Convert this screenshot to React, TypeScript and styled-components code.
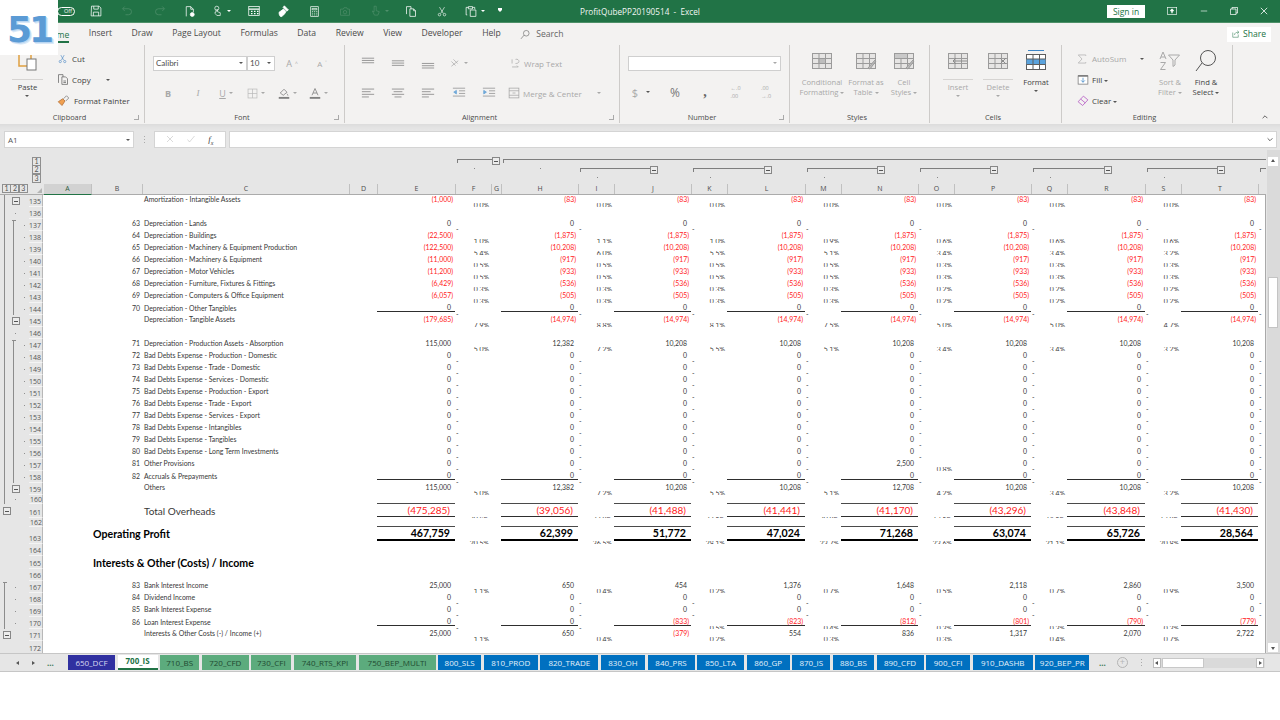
import React from 'react';
import styled, { createGlobalStyle } from 'styled-components';

const GREEN = '#217346';
const CHROME = '#e6e6e6';
const RIBBON = '#f3f2f1';
const MUTED = '#a8a8a8';
const INK = '#5a5a5a';
const UI_FONT = '"Open Sans", "Noto Sans", sans-serif';
const CELL_FONT = 'Lato, "Liberation Sans", sans-serif';
const COLS = '48px 51px 207px 28px 78px 36px 10px 77px 36px 77px 36px 78px 36px 77px 36px 77px 36px 78px 36px 77px 7px';

const GlobalStyle = createGlobalStyle`
	html, body {
		margin: 0;
		padding: 0;
		background: #fff;
		overflow: hidden;
	}
	* {
		box-sizing: border-box;
	}
`;

const Shell = styled.div`
	position: relative;
	width: 1280px;
	height: 720px;
	display: flex;
	flex-direction: column;
	font-family: ${UI_FONT};
	background: #fff;
`;

/* watermark square lying over the top left corner of the window */
const Badge = styled.div`
	position: absolute;
	left: 0;
	top: 0;
	width: 58px;
	height: 55px;
	background: #fff;
	display: flex;
	align-items: center;
	justify-content: center;
	padding: 5px 0 0 0;
	font: bold 36px/1 'DejaVu Sans', sans-serif;
	letter-spacing: -3px;
	color: #5b9bd5;
	text-shadow: 1px 1px 0 #b9d6f2, 2px 2px 0 #d9e8f7;
	transform-origin: center;
`;

const TitleBar = styled.header`
	height: 23px;
	background: ${GREEN};
	border-bottom: 1px solid #4d9068;
	display: grid;
	grid-template-columns: 1fr auto 1fr;
	align-items: center;
	color: #fff;
`;

const Qat = styled.div`
	display: flex;
	align-items: center;
	padding-left: 57px;
`;

const QatSlot = styled.div<{ $w: number }>`
	width: ${(p) => p.$w}px;
	height: 22px;
	display: flex;
	align-items: center;
	justify-content: center;
	gap: 4px;
`;

const Toggle = styled.div`
	width: 18px;
	height: 9px;
	border: 1px solid #fff;
	border-radius: 5px;
	font-size: 5.5px;
	line-height: 7px;
	text-align: right;
	padding-right: 2px;
	color: #fff;
`;

const Title = styled.div`
	font-size: 8.2px;
	white-space: pre;
	color: #f1f6f3;
`;

const WindowControls = styled.div`
	display: flex;
	align-items: center;
	justify-content: flex-end;
	padding-right: 1px;
`;

const SignIn = styled.button`
	width: 38px;
	height: 13px;
	margin-right: 12px;
	border: none;
	padding: 0;
	background: #fff;
	color: ${GREEN};
	font: 8.5px/13px ${UI_FONT};
`;

const WindowButton = styled.div<{ $mr?: number }>`
	width: 30px;
	height: 22px;
	margin-right: ${(p) => p.$mr ?? 0}px;
	display: flex;
	align-items: center;
	justify-content: center;
`;

const TabStrip = styled.nav`
	height: 22px;
	background: ${RIBBON};
	display: flex;
	align-items: center;
	padding-left: 45px;
	gap: 19.5px;
	font-size: 8.6px;
	color: #4a4a4a;
`;

const RibbonTab = styled.span<{ $active?: boolean }>`
	height: 22px;
	line-height: 20px;
	white-space: nowrap;
	${(p) => (p.$active ? `color: ${GREEN}; border-bottom: 2px solid ${GREEN}; height: 18px; margin-top: -1px; line-height: 20px;` : '')}
`;

const SearchBox = styled.span`
	display: flex;
	align-items: center;
	gap: 6px;
	color: #666;
	margin-left: 0;
`;

const ShareButton = styled.div`
	margin-left: auto;
	margin-right: 9px;
	width: 44px;
	height: 15px;
	background: #fff;
	color: ${GREEN};
	font-size: 8.6px;
	display: flex;
	align-items: center;
	justify-content: center;
	gap: 3px;
`;

const Ribbon = styled.section`
	height: 79px;
	background: ${RIBBON};
	display: flex;
`;

const Group = styled.div<{ $w: number }>`
	width: ${(p) => p.$w}px;
	height: 78px;
	display: flex;
	flex-direction: column;
	border-right: 1px solid #cdcbc9;
`;

const GroupBody = styled.div<{ $pl?: number }>`
	height: 66px;
	padding: 3px 0 0 ${(p) => p.$pl ?? 0}px;
	display: flex;
`;

const GroupLabel = styled.div`
	height: 12px;
	display: grid;
	grid-template-columns: 1fr auto 1fr;
	align-items: center;
	font-size: 7.4px;
	color: #4c4c4c;
	padding-right: 5px;
`;

const Launcher = styled.span`
	grid-column: 3;
	justify-self: end;
	width: 5px;
	height: 5px;
	border: 1px solid #a9a9a9;
	border-width: 0 1px 1px 0;
`;

const ToolColumn = styled.div<{ $w?: number; $dim?: boolean }>`
	width: ${(p) => (p.$w ? `${p.$w}px` : 'auto')};
	display: flex;
	flex-direction: column;
	align-items: center;
	font-size: 7.6px;
	line-height: 10px;
	color: ${(p) => (p.$dim ? MUTED : '#3f3f3f')};
	white-space: nowrap;
`;

const BigIcon = styled.div`
	height: 26px;
	display: flex;
	align-items: center;
	justify-content: center;
	margin-bottom: 3px;
`;

const SplitRule = styled.div`
	width: 100%;
	height: 1px;
	background: #d6d4d2;
	margin: 2px 0 2px;
`;

const Stack = styled.div<{ $w?: number }>`
	width: ${(p) => (p.$w ? `${p.$w}px` : 'auto')};
	display: flex;
	flex-direction: column;
`;

const Line = styled.div<{ $h?: number; $dim?: boolean; $gap?: number }>`
	height: ${(p) => p.$h ?? 21}px;
	display: flex;
	align-items: center;
	gap: ${(p) => p.$gap ?? 3}px;
	font-size: 8px;
	white-space: nowrap;
	color: ${(p) => (p.$dim ? MUTED : '#3f3f3f')};
`;

const Slot = styled.div<{ $w: number; $color?: string; $size?: number }>`
	width: ${(p) => p.$w}px;
	display: flex;
	align-items: center;
	justify-content: center;
	gap: 3px;
	font-size: ${(p) => p.$size ?? 8}px;
	color: ${(p) => p.$color ?? MUTED};
`;

const Caret = styled.span<{ $dim?: boolean; $ml?: number }>`
	display: inline-block;
	width: 0;
	height: 0;
	margin-left: ${(p) => p.$ml ?? 0}px;
	border-left: 2px solid transparent;
	border-right: 2px solid transparent;
	border-top: 2.5px solid ${(p) => (p.$dim ? MUTED : '#555')};
	vertical-align: middle;
`;

const Combo = styled.div<{ $w: number }>`
	width: ${(p) => p.$w}px;
	height: 15px;
	background: #fff;
	border: 1px solid #cfcfcf;
	display: flex;
	align-items: center;
	justify-content: space-between;
	padding: 0 3px 0 2px;
	font: 8px ${CELL_FONT};
	color: #4d4d4d;
`;

const FormulaRow = styled.div`
	height: 26px;
	background: linear-gradient(#dcdcdc 0, #e2e2e2 3px, ${CHROME} 6px);
	padding: 7px 3px 0 4px;
	display: flex;
	align-items: flex-start;
`;

const InputBox = styled.div<{ $w?: number; $ml?: number }>`
	${(p) => (p.$w ? `width: ${p.$w}px;` : 'flex: 1;')}
	margin-left: ${(p) => p.$ml ?? 0}px;
	height: 17px;
	background: #fff;
	border: 1px solid #d4d4d4;
	display: flex;
	align-items: center;
	justify-content: space-between;
	padding: 0 3px;
	font-size: 8px;
	color: #555;
`;

const FxIcons = styled.div`
	flex: 1;
	display: flex;
	align-items: center;
	justify-content: space-around;
	padding: 0 2px;
`;

const Dots = styled.span`
	width: 1px;
	height: 7px;
	margin: 5px 0 0 10px;
	background: repeating-linear-gradient(#aaa 0 1px, transparent 1px 3px);
`;

const Middle = styled.main`
	height: 503px;
	display: flex;
	background: ${CHROME};
`;

const SheetArea = styled.div`
	width: 1266px;
	display: flex;
	flex-direction: column;
`;

const OutlineHead = styled.div`
	height: 34px;
	padding-top: 7px;
	display: flex;
	background: ${CHROME};
`;

const LevelStack = styled.div`
	width: 44px;
	padding-left: 32px;
	display: flex;
	flex-direction: column;
`;

const LevelButton = styled.span`
	width: 9px;
	height: 9px;
	border: 1px solid #8f8f8f;
	background: ${CHROME};
	font: 7px/7px ${CELL_FONT};
	color: #555;
	text-align: center;
	margin-bottom: -0.6px;
	display: block;
`;

const Lanes = styled.div`
	flex: 1;
	display: flex;
	flex-direction: column;
`;

const Lane = styled.div`
	height: 9px;
	display: grid;
	grid-template-columns: ${COLS};
`;

const Bracket = styled.div<{ $start: number; $span: number; $inset?: number }>`
	grid-column: ${(p) => p.$start} / span ${(p) => p.$span};
	display: flex;
	align-items: flex-start;
	padding-left: 1px;
	padding-right: ${(p) => p.$inset ?? 0}px;
`;

const BracketLine = styled.div`
	flex: 1;
	height: 4px;
	margin-top: 1.5px;
	border-top: 1px solid #7e7e7e;
	border-left: 1px solid #7e7e7e;
`;

const Minus = styled.span`
	display: flex;
	align-items: center;
	justify-content: center;
	flex: none;
	width: 8px;
	height: 8px;
	border: 1px solid #878787;
	background: #ececec;

	&::before {
		content: '';
		width: 4px;
		height: 1px;
		background: #555;
	}
`;

const DotCell = styled.div<{ $start: number }>`
	grid-column: ${(p) => p.$start};
	display: flex;
	justify-content: center;
	padding-top: 1.5px;

	&::before {
		content: '';
		width: 1px;
		height: 1px;
		background: #888;
	}
`;

const ColumnHead = styled.div`
	height: 11px;
	display: flex;
	background: ${CHROME};
	border-bottom: 1px solid #ababab;
`;

const LevelRow = styled.div`
	width: 30px;
	padding-left: 2px;
	display: flex;
`;

const LevelInline = styled(LevelButton)`
	height: 9px;
	margin: 0 -0.6px 0 0;
`;

const Corner = styled.div`
	width: 14px;
	display: flex;
	align-items: flex-end;
	justify-content: flex-end;
	padding: 0 2px 1px 0;

	&::before {
		content: '';
		width: 0;
		height: 0;
		border-left: 5px solid transparent;
		border-bottom: 5px solid #b5b5b5;
	}
`;

const Letters = styled.div`
	display: grid;
	grid-template-columns: ${COLS};
`;

const Letter = styled.div<{ $on?: boolean }>`
	height: 10px;
	font: 7px/10px ${UI_FONT};
	text-align: center;
	color: #4c4c4c;
	border-right: 1px solid #c0c0c0;
	${(p) => (p.$on ? `background: #d2d2d2; border-bottom: 1px solid ${GREEN}; height: 11px; color: #2f5d43;` : '')}
`;

const SheetRows = styled.div`
	flex: 1;
	display: flex;
	flex-direction: column;
	border-right: 1px solid #a9a9a9;
`;

const SheetRow = styled.div<{ $h: number }>`
	height: ${(p) => p.$h}px;
	display: flex;
`;

const Gutter = styled.div`
	width: 30px;
	padding-left: 2px;
	display: grid;
	grid-template-columns: 9px 9px 9px;
	background: ${CHROME};
`;

const GutterSlot = styled.div<{ $line?: boolean; $tick?: boolean }>`
	display: flex;
	align-items: center;
	justify-content: center;
	${(p) =>
		p.$line
			? `background: linear-gradient(#8c8c8c, #8c8c8c) no-repeat 1.5px ${p.$tick ? '2px' : '0'} / 1px 100%;`
			: ''}
	${(p) =>
		p.$tick
			? `&::before { content: ''; width: 4px; height: 1px; background: #8c8c8c; margin: -10px 0 0 -4px; }`
			: ''}
`;

const OutlineDot = styled.span`
	width: 1px;
	height: 1px;
	background: #909090;
`;

const RowHeader = styled.div<{ $h: number }>`
	width: 14px;
	height: ${(p) => p.$h}px;
	background: ${CHROME};
	border-bottom: 1px solid #f4f4f4;
	border-right: 1px solid #b8b8b8;
	font: 7px/9px ${UI_FONT};
	color: #555;
	text-align: right;
	padding: ${(p) => p.$h - 10}px 1px 0 0;
`;

const Cells = styled.div`
	flex: 1;
	background: #fff;
	display: grid;
	grid-template-columns: ${COLS};
`;

type Tone = 'normal' | 'total' | 'profit';

const sizes: Record<Tone, string> = {
	normal: '6.9px',
	total: '10px',
	profit: '10.6px',
};

const Note = styled.div<{ $tone: Tone; $col: number }>`
	grid-column: ${(p) => p.$col};
	font-family: ${CELL_FONT};
	font-size: ${(p) => sizes[p.$tone]};
	font-weight: ${(p) => (p.$tone === 'profit' ? 700 : 400)};
	color: ${(p) => (p.$tone === 'profit' ? '#000' : '#383838')};
	white-space: nowrap;
	display: flex;
	align-items: center;
	padding-left: 2px;
`;

const SerialNo = styled.div`
	grid-column: 2;
	font: 6.9px ${CELL_FONT};
	color: #383838;
	display: flex;
	align-items: center;
	justify-content: flex-end;
	padding-right: 2px;
`;

const ValueCell = styled.div<{ $col: number; $tone: Tone; $neg?: boolean; $rule?: string }>`
	grid-column: ${(p) => p.$col};
	font-family: ${CELL_FONT};
	font-size: ${(p) => sizes[p.$tone]};
	font-weight: ${(p) => (p.$tone === 'profit' ? 700 : 400)};
	color: ${(p) => (p.$neg ? '#ff1a1a' : p.$tone === 'profit' ? '#000' : '#383838')};
	display: flex;
	align-items: center;
	justify-content: flex-end;
	white-space: nowrap;
	padding-right: ${(p) => (p.$tone !== 'normal' ? 5 : p.$neg ? 2 : 4)}px;
	${(p) => (p.$rule ? `border-bottom: ${p.$rule};` : '')}
`;

const PctCell = styled.div<{ $col: number; $dash: boolean }>`
	grid-column: ${(p) => p.$col};
	font: 6.9px ${CELL_FONT};
	color: #383838;
	display: flex;
	align-items: center;
	justify-content: ${(p) => (p.$dash ? 'flex-start' : 'flex-end')};
	padding: ${(p) => (p.$dash ? '0 0 0 1px' : '0 2px 0 0')};
	overflow: hidden;
`;

const VScroll = styled.aside`
	width: 14px;
	padding: 7px 2px 1px;
	display: flex;
	flex-direction: column;
	justify-content: space-between;
	background: linear-gradient(90deg, ${CHROME} 1px, #dadada 1px);
`;

const ScrollEnd = styled.div`
	width: 10px;
	height: 9px;
	background: #fff;
	display: flex;
	align-items: center;
	justify-content: center;
`;

const Arrow = styled.span<{ $dir: 'up' | 'down' | 'left' | 'right' }>`
	width: 0;
	height: 0;
	border: 2.5px solid transparent;
	${(p) => `border-${{ up: 'bottom', down: 'top', left: 'right', right: 'left' }[p.$dir]}: 3px solid #555;`}
	${(p) => (p.$dir === 'up' ? 'margin-top: -3px;' : p.$dir === 'down' ? 'margin-bottom: -3px;' : p.$dir === 'left' ? 'margin-left: -3px;' : 'margin-right: -3px;')}
`;

const VThumb = styled.div`
	width: 10px;
	height: 53px;
	margin-top: 111px;
	margin-bottom: 315px;
	background: #fff;
	border: 1px solid #c4c4c4;
`;

const TabBar = styled.footer`
	height: 19px;
	background: ${CHROME};
	border-top: 1px solid #c6c6c6;
	border-bottom: 1px solid #c6c6c6;
	display: flex;
	align-items: center;
	font-family: ${UI_FONT};
`;

const TabNav = styled.div`
	width: 68px;
	display: flex;
	align-items: center;
	padding-left: 17px;
	gap: 13px;
	font-size: 8px;
	font-weight: 700;
	color: #3f7a56;
	line-height: 1;
`;

const SheetTabs = styled.div`
	width: 1026px;
	display: flex;
	overflow: hidden;
`;

const palette = {
	purple: { bg: '#3030a0', fg: '#d8d8f0' },
	green: { bg: '#5cab7d', fg: '#1f4a31' },
	blue: { bg: '#0070c0', fg: '#e4f0fa' },
};

const SheetTab = styled.div<{ $w: number; $kind: keyof typeof palette }>`
	flex: none;
	width: ${(p) => p.$w}px;
	height: 15px;
	margin-right: 2.6px;
	background: ${(p) => palette[p.$kind].bg};
	color: ${(p) => palette[p.$kind].fg};
	font-size: 8px;
	line-height: 15px;
	text-align: center;
	white-space: nowrap;
	overflow: hidden;
`;

const ActiveTab = styled(SheetTab)`
	background: #fff;
	color: ${GREEN};
	font-weight: 700;
	height: 17px;
	line-height: 15px;
	border-bottom: 2px solid ${GREEN};
	margin-top: -2px;
`;

const TabTools = styled.div`
	flex: 1;
	display: flex;
	align-items: center;
	font-size: 8px;
	font-weight: 700;
	color: #3f7a56;
	padding-left: 5px;
`;

const PlusCircle = styled.span`
	width: 11px;
	height: 11px;
	margin-left: 11px;
	border: 1px solid #b4b4b4;
	border-radius: 50%;
	font: 9px/8px ${UI_FONT};
	color: #b4b4b4;
	text-align: center;
`;

const SplitDots = styled(Dots)`
	margin: 0 11px 0 13px;
	height: 8px;
`;

const HScroll = styled.div`
	width: 112px;
	height: 10px;
	display: flex;
	background: #dadada;
`;

const HEnd = styled.div`
	width: 8px;
	background: #fff;
	border: 1px solid #bcbcbc;
	display: flex;
	align-items: center;
	justify-content: center;
`;

const HThumb = styled.div`
	width: 42px;
	margin-left: 1px;
	background: #fff;
	border: 1px solid #c8c8c8;
	margin-right: auto;
`;

type SvgProps = { w?: number; h?: number; box?: string; stroke?: string; fill?: string; children: React.ReactNode };

function Draw({ w = 14, h = 14, box = '0 0 16 16', stroke = '#666', fill = 'none', children }: SvgProps) {
	return (
		<svg width={w} height={h} viewBox={box} fill={fill} stroke={stroke} strokeWidth={1} style={{ flex: 'none' }}>
			{children}
		</svg>
	);
}

function TextLines({ align, valign, color = '#8d8d8d' }: { align?: 'left' | 'center'; valign?: number; color?: string }) {
	const y = valign ?? 3;
	const gap = align ? 3 : 2.6;
	const rows = align === undefined ? [14, 14, 14] : align === 'left' ? [14, 10, 14, 8] : [14, 10, 14, 8];
	return (
		<Draw stroke={color}>
			{rows.map((len, i) => {
				const x = align === 'center' ? 8 - len / 2 : 1;
				return <path key={i} d={`M${x} ${y + i * gap + 0.5}h${len}`} />;
			})}
		</Draw>
	);
}

function Indent({ back }: { back?: boolean }) {
	return (
		<Draw stroke="#9a9a9a">
			<path d="M1 2.5h14M8 5.5h7M8 8.5h7M1 11.5h14" />
			<path d={back ? 'M5 5 2 7l3 2z' : 'M2 5l3 2-3 2z'} fill="#6fa8d8" stroke="#6fa8d8" />
		</Draw>
	);
}

function TableIcon({ children, size = 22 }: { children?: React.ReactNode; size?: number }) {
	return (
		<Draw w={size} h={size} box="0 0 22 22" stroke="#9b9b9b">
			<rect x="1.5" y="3.5" width="19" height="15" fill="#e6e5e4" />
			<path d="M1.5 8.5h19M1.5 13.5h19M8 3.5v15M14.5 3.5v15" />
			{children}
		</Draw>
	);
}

function QatBar() {
	return (
		<Qat>
			<QatSlot $w={18}>
				<Toggle>Off</Toggle>
			</QatSlot>
			<QatSlot $w={6} />
			<QatSlot $w={30}>
				<Draw stroke="#fff" w={12} h={12}>
					<path d="M2 1.5h10l2.5 2.5v10.5h-13zM5 1.5v4h6v-4M4.5 14.5v-5h7v5" />
				</Draw>
			</QatSlot>
			<QatSlot $w={32}>
				<Draw stroke="#4f8f6b" w={12} h={12}>
					<path d="M5 2 2 5l3 3M2.5 5H10a4 4 0 0 1 0 8H6" />
				</Draw>
			</QatSlot>
			<QatSlot $w={34}>
				<Draw stroke="#4f8f6b" w={12} h={12}>
					<path d="m11 2 3 3-3 3M13.5 5H6a4 4 0 0 0 0 8h4" />
				</Draw>
			</QatSlot>
			<QatSlot $w={26}>
				<Draw stroke="#fff" w={12} h={13}>
					<path d="M3 14.5v-13h6l3.5 3.5v4M9 1.5v3.5h3.500" />
					<circle cx="11" cy="12" r="2.6" fill="#fff" />
				</Draw>
			</QatSlot>
			<QatSlot $w={37}>
				<Draw stroke="#fff" w={11} h={14}>
					<circle cx="7" cy="4" r="3" />
					<path d="M6 5.500v4H4.500v2l2.500 3h5v-4l-4-1.500v-3.500" />
				</Draw>
				<Caret style={{ borderTopColor: '#fff' }} />
			</QatSlot>
			<QatSlot $w={27}>
				<Draw stroke="#fff" w={12} h={12}>
					<rect x="1" y="2" width="14" height="12" />
					<path d="M1 5.500h14M4 8.500h2M8 8.500h2M12 8.500h2M4 11.500h2M8 11.500h2M12 11.500h2" strokeWidth="1.5" />
				</Draw>
			</QatSlot>
			<QatSlot $w={33}>
				<Draw stroke="#fff" w={13} h={13}>
					<path d="m9 1 5 5-2 1.500L7.500 3zM8 5 2.500 9c0 3 1 5 2.500 5.500 2-1 4.500-3 6-6.500z" fill="#fff" />
				</Draw>
			</QatSlot>
			<QatSlot $w={29}>
				<Draw stroke="#fff" w={11} h={13}>
					<rect x="2.500" y="1" width="11" height="14" />
					<path d="M4.500 3.500h7v2h-7zM4.500 8h1.500M7.500 8H9M10.500 8H12M4.500 10.500h1.500M7.500 10.500H9M10.500 10.500H12M4.500 13h1.500M7.500 13H9M10.500 13H12" />
				</Draw>
			</QatSlot>
			<QatSlot $w={32}>
				<Draw stroke="#4f8f6b" w={12} h={11}>
					<path d="M1.500 4.500h4l1-2h4l1 2h3v9h-13z" />
					<circle cx="8" cy="9" r="2.500" />
				</Draw>
			</QatSlot>
			<QatSlot $w={36}>
				<Draw stroke="#4f8f6b" w={11} h={14}>
					<path d="M6 1v8l-2.500-1 3 6h5l2-5-4.500-1.500V1z" />
				</Draw>
				<Caret style={{ borderTopColor: '#4f8f6b' }} />
			</QatSlot>
			<QatSlot $w={27}>
				<Draw stroke="#fff" w={12} h={13}>
					<path d="M2 11.500v-10h6v3M6.500 14.500v-10h5l2.500 2.500v7.500zM11.500 4.500V7H14" />
				</Draw>
			</QatSlot>
			<QatSlot $w={35}>
				<Draw stroke="#fff" w={10} h={13}>
					<path d="m4 1 6 10M12 1 6 11" />
					<circle cx="4" cy="13" r="2" />
					<circle cx="12" cy="13" r="2" />
				</Draw>
			</QatSlot>
			<QatSlot $w={32}>
				<Draw stroke="#fff" w={12} h={13}>
					<path d="M3 12.500h-1.500v-10h3M10 2.500h3V5M4.500 1.500h5.500v3h-5.500zM7 6h7.500v8.500H7z" />
				</Draw>
				<Caret style={{ borderTopColor: '#fff' }} />
			</QatSlot>
			<QatSlot $w={18}>
				<Caret style={{ borderTopColor: '#fff', boxShadow: '0 -2px 0 0 #fff' }} />
			</QatSlot>
		</Qat>
	);
}

function WindowBar() {
	return (
		<WindowControls>
			<SignIn>Sign in</SignIn>
			<WindowButton $mr={2}>
				<Draw stroke="#fff" w={10} h={8} box="0 0 16 12">
					<rect x="0.500" y="0.500" width="15" height="11" />
					<path d="M8 9.500V4M5.500 6 8 3.500 10.500 6" strokeWidth="2" />
				</Draw>
			</WindowButton>
			<WindowButton>
				<Draw stroke="#cfe2d7" w={8} h={8} box="0 0 10 10">
					<path d="M1 5h8" />
				</Draw>
			</WindowButton>
			<WindowButton>
				<Draw stroke="#fff" w={8} h={8} box="0 0 10 10">
					<path d="M0.500 2.500h7v7h-7zM2.500 2.500v-2h7v7h-2" />
				</Draw>
			</WindowButton>
			<WindowButton>
				<Draw stroke="#fff" w={8} h={8} box="0 0 10 10">
					<path d="m1 1 8 8M9 1 1 9" />
				</Draw>
			</WindowButton>
		</WindowControls>
	);
}

function RibbonTabs() {
	return (
		<TabStrip>
			<RibbonTab $active>Home</RibbonTab>
			<RibbonTab>Insert</RibbonTab>
			<RibbonTab>Draw</RibbonTab>
			<RibbonTab>Page Layout</RibbonTab>
			<RibbonTab>Formulas</RibbonTab>
			<RibbonTab>Data</RibbonTab>
			<RibbonTab>Review</RibbonTab>
			<RibbonTab>View</RibbonTab>
			<RibbonTab>Developer</RibbonTab>
			<RibbonTab>Help</RibbonTab>
			<SearchBox>
				<Draw w={10} h={11} stroke="#666">
					<circle cx="10" cy="6" r="4.500" />
					<path d="M6.500 9 1.500 15" />
				</Draw>
				Search
			</SearchBox>
			<ShareButton>
				<Draw w={8} h={8} stroke={GREEN}>
					<path d="M1.500 5v9.500h11V9M5 10c0-4 3-5.500 8-5.500M10.500 1.500l3.500 3-3.500 3" />
				</Draw>
				Share
			</ShareButton>
		</TabStrip>
	);
}

function RibbonGroups() {
	return (
		<Ribbon>
			<Group $w={145}>
				<GroupBody $pl={12}>
					<ToolColumn $w={32}>
						<BigIcon>
							<Draw w={24} h={24} box="0 0 24 24" stroke="#e0a040">
								<path d="M7 4h9v13H4V4z" strokeWidth="1.500" />
								<rect x="12" y="10" width="9" height="11" fill="#fff" stroke="#777" />
							</Draw>
						</BigIcon>
						<SplitRule />
						Paste
						<Caret style={{ marginTop: 3 }} />
					</ToolColumn>
					<Stack $w={90} style={{ marginLeft: 14 }}>
						<Line $gap={4}>
							<Slot $w={11}>
								<Draw w={9} h={12} stroke="#3d7fc0">
									<path d="m5 1 5 9M11 1 6 10" />
									<circle cx="4" cy="12.500" r="2" />
									<circle cx="12" cy="12.500" r="2" />
								</Draw>
							</Slot>
							Cut
						</Line>
						<Line $gap={3}>
							<Draw w={12} h={13} stroke="#666">
								<path d="M2 12.500v-11h6v3M6.500 14.500v-10h5l2.500 2.500v7.500zM8.500 10h3.500M8.500 12h3.500" />
							</Draw>
							Copy
							<Caret $ml={12} />
						</Line>
						<Line $gap={4}>
							<Draw w={13} h={12} stroke="#b06a30">
								<path d="m1 9 6-4 3 3-4 6z" fill="#f0a050" />
								<path d="m8 5 4-4 3 3-4 4" stroke="#777" />
							</Draw>
							Format Painter
						</Line>
					</Stack>
				</GroupBody>
				<GroupLabel>
					<span style={{ gridColumn: 2 }}>Clipboard</span>
					<Launcher />
				</GroupLabel>
			</Group>

			<Group $w={200}>
				<GroupBody $pl={8}>
					<Stack>
						<Line $h={30} $gap={0}>
							<Combo $w={94}>
								Calibri
								<Caret />
							</Combo>
							<Combo $w={28}>
								10
								<Caret />
							</Combo>
							<Slot $w={30} style={{ marginLeft: 2 }} $size={9}>A<sup style={{ fontSize: 5 }}>^</sup></Slot>
							<Slot $w={30} $size={8}>A<sup style={{ fontSize: 5 }}>˅</sup></Slot>
						</Line>
						<Line $h={30} $gap={0} style={{ paddingLeft: 0 }}>
							<Slot $w={30} style={{ marginRight: 0 }} $size={9}>
								<b>B</b>
							</Slot>
							<Slot $w={30} $size={9}>
								<i style={{ fontFamily: 'Liberation Serif, serif' }}>I</i>
							</Slot>
							<Slot $w={26} $size={9}>
								<u>U</u>
								<Caret $dim />
							</Slot>
							<Slot $w={33}>
								<Draw w={11} h={11} stroke="#b8b8b8">
									<rect x="1.500" y="1.500" width="13" height="13" />
									<path d="M1.500 8h13M8 1.500v13" />
								</Draw>
								<Caret $dim />
							</Slot>
							<Slot $w={31}>
								<Draw w={12} h={12} stroke="#777">
									<path d="m3 8 5-5 4 4-5 4zM12 9c1 1.500 1.500 2 1 2.500" />
									<path d="M1 14.500h14" stroke="#808080" strokeWidth="2.500" />
								</Draw>
								<Caret $dim />
							</Slot>
							<Slot $w={31}>
								<Draw w={12} h={12} stroke="#777">
									<path d="m4 11 4-9 4 9M5.500 8h5" />
									<path d="M1 14.500h14" stroke="#808080" strokeWidth="2.500" />
								</Draw>
								<Caret $dim />
							</Slot>
						</Line>
					</Stack>
				</GroupBody>
				<GroupLabel>
					<span style={{ gridColumn: 2 }}>Font</span>
					<Launcher />
				</GroupLabel>
			</Group>

			<Group $w={275}>
				<GroupBody $pl={8}>
					<Stack>
						<Line $h={30} $gap={0}>
							<Slot $w={30}><TextLines valign={2} /></Slot>
							<Slot $w={30}><TextLines valign={5} /></Slot>
							<Slot $w={30}><TextLines valign={8} /></Slot>
							<Slot $w={32}>
								<Draw w={11} h={11} stroke="#a5a5a5">
									<path d="m2 12 10-8M5 2l6 6M2 5l6 6" />
								</Draw>
								<Caret $dim />
							</Slot>
							<Slot $w={28} />
							<Line $dim $gap={3} style={{ marginLeft: 7 }}>
								<Draw w={11} h={11} stroke="#a5a5a5">
									<path d="M3 2v6M8 2c3-1 5 1 5 3s-2 3-5 3M3 13h9l-2-2" />
								</Draw>
								Wrap Text
							</Line>
						</Line>
						<Line $h={30} $gap={0}>
							<Slot $w={30}><TextLines align="left" /></Slot>
							<Slot $w={30}><TextLines align="center" /></Slot>
							<Slot $w={30}><TextLines align="left" /></Slot>
							<Slot $w={32}><Indent back /></Slot>
							<Slot $w={28}><Indent /></Slot>
							<Line $dim $gap={3} style={{ marginLeft: 5 }}>
								<Draw w={12} h={12} stroke="#a5a5a5">
									<rect x="1.500" y="1.500" width="13" height="13" />
									<path d="M1.500 5h13M1.500 11h13M6 8h4" />
								</Draw>
								Merge &amp; Center
								<Caret $dim $ml={12} />
							</Line>
						</Line>
					</Stack>
				</GroupBody>
				<GroupLabel>
					<span style={{ gridColumn: 2 }}>Alignment</span>
					<Launcher />
				</GroupLabel>
			</Group>

			<Group $w={170}>
				<GroupBody $pl={8}>
					<Stack>
						<Line $h={30}>
							<Combo $w={153}>
								<span />
								<Caret $dim />
							</Combo>
						</Line>
						<Line $h={28} $gap={0}>
							<Slot $w={26} $size={11}>$<Caret style={{ marginLeft: 5, borderTopColor: '#555' }} /></Slot>
							<Slot $w={30} $size={12} $color="#777" style={{ marginLeft: 6 }}>%</Slot>
							<Slot $w={30} $size={14} $color="#666"><b style={{ fontFamily: 'Liberation Serif, serif' }}>,</b></Slot>
							<Slot $w={31} $size={5.500}>←.0<br />.00</Slot>
							<Slot $w={30} $size={5.500}>.00<br />→.0</Slot>
						</Line>
					</Stack>
				</GroupBody>
				<GroupLabel>
					<span style={{ gridColumn: 2 }}>Number</span>
					<Launcher />
				</GroupLabel>
			</Group>

			<Group $w={140}>
				<GroupBody $pl={10}>
					<ToolColumn $w={44} $dim>
						<BigIcon>
							<TableIcon>
								<rect x="8" y="8.500" width="6.500" height="5" fill="#bdbdbd" />
							</TableIcon>
						</BigIcon>
						Conditional
						<span>Formatting <Caret $dim /></span>
					</ToolColumn>
					<ToolColumn $w={44} $dim>
						<BigIcon>
							<TableIcon>
								<path d="m13 18 7-8 1 1-6 8z" fill="#bdbdbd" />
							</TableIcon>
						</BigIcon>
						Format as
						<span>Table <Caret $dim /></span>
					</ToolColumn>
					<ToolColumn $w={32} $dim>
						<BigIcon>
							<TableIcon>
								<rect x="1.500" y="3.500" width="13" height="5" fill="#c9c9c9" />
								<path d="m13 18 7-8 1 1-6 8z" fill="#bdbdbd" />
							</TableIcon>
						</BigIcon>
						Cell
						<span>Styles <Caret $dim /></span>
					</ToolColumn>
				</GroupBody>
				<GroupLabel>
					<span style={{ gridColumn: 2 }}>Styles</span>
				</GroupLabel>
			</Group>

			<Group $w={132}>
				<GroupBody $pl={13}>
					<ToolColumn $w={30} $dim>
						<BigIcon>
							<TableIcon>
								<path d="M20 11H6M9 8l-3 3 3 3" stroke="#8c8c8c" />
							</TableIcon>
						</BigIcon>
						<SplitRule />
						Insert
						<Caret $dim style={{ marginTop: 3 }} />
					</ToolColumn>
					<ToolColumn $w={30} $dim style={{ marginLeft: 10 }}>
						<BigIcon>
							<TableIcon>
								<path d="m13 8 6 6M19 8l-6 6" stroke="#8c8c8c" />
							</TableIcon>
						</BigIcon>
						<SplitRule />
						Delete
						<Caret $dim style={{ marginTop: 3 }} />
					</ToolColumn>
					<ToolColumn $w={32} style={{ marginLeft: 7 }}>
						<BigIcon>
							<Draw w={22} h={24} box="0 0 22 24" stroke="#5e5e5e">
								<path d="M3 1.500h16" stroke="#3d85c6" />
								<rect x="1.500" y="5.500" width="19" height="15" fill="#fff" />
								<rect x="1.500" y="10" width="19" height="5.500" fill="#5ba3dd" stroke="none" />
								<path d="M1.500 10h19M1.500 15.500h19M8 5.500v15M14.500 5.500v15" />
							</Draw>
						</BigIcon>
						Format
						<Caret style={{ marginTop: 3 }} />
					</ToolColumn>
				</GroupBody>
				<GroupLabel>
					<span style={{ gridColumn: 2 }}>Cells</span>
				</GroupLabel>
			</Group>

			<Group $w={171}>
				<GroupBody $pl={15}>
					<Stack $w={75}>
						<Line $dim $gap={5}>
							<Draw w={10} h={12} stroke="#a5a5a5">
								<path d="M14 3V1.500H2L8 8l-6 6.500h12V13" />
							</Draw>
							AutoSum
							<Caret $ml={9} />
						</Line>
						<Line $gap={3}>
							<Draw w={12} h={12} stroke="#777">
								<rect x="1.500" y="2.500" width="13" height="11" fill="#fff" />
								<path d="M1.500 2.500h13" strokeWidth="2" />
								<path d="M8 5v6M5.500 8.500 8 11l2.500-2.500" stroke="#3d85c6" />
							</Draw>
							<span>Fill <Caret /></span>
						</Line>
						<Line $gap={3}>
							<Draw w={12} h={12} stroke="#b04fc0">
								<path d="m1.500 9 7-7.500 6 5-7 7.500z" />
								<path d="m5 5.500 6 5" />
							</Draw>
							<span>Clear <Caret /></span>
						</Line>
					</Stack>
					<ToolColumn $w={36} $dim>
						<BigIcon>
							<Draw w={24} h={22} box="0 0 24 22" stroke="#a9a9a9">
								<path d="m2 9 3-7 3 7M3 7h4M2.500 12.500h5l-5 7h5M10.500 5h11l-4.500 5v5l-2 1.500V10z" />
							</Draw>
						</BigIcon>
						Sort &amp;
						<span>Filter <Caret $dim /></span>
					</ToolColumn>
					<ToolColumn $w={36}>
						<BigIcon>
							<Draw w={24} h={24} box="0 0 24 24" stroke="#555">
								<circle cx="14" cy="9" r="7.500" />
								<path d="M8 14 2 22" />
							</Draw>
						</BigIcon>
						Find &amp;
						<span>Select <Caret /></span>
					</ToolColumn>
				</GroupBody>
				<GroupLabel>
					<span style={{ gridColumn: 2 }}>Editing</span>
				</GroupLabel>
			</Group>

			<ToolColumn style={{ flex: 1, alignItems: 'flex-end', justifyContent: 'flex-end', padding: '0 12px 5px 0' }}>
				<Draw w={6} h={4} box="0 0 10 6" stroke="#555">
					<path d="m1 5 4-4 4 4" strokeWidth="1.500" />
				</Draw>
			</ToolColumn>
		</Ribbon>
	);
}

function FormulaBar() {
	return (
		<FormulaRow>
			<InputBox $w={130}>
				A1
				<Caret />
			</InputBox>
			<Dots />
			<InputBox $w={72} $ml={9}>
				<FxIcons>
					<Draw w={8} h={8} stroke="#b5b5b5"><path d="m2 2 12 12M14 2 2 14" /></Draw>
					<Draw w={8} h={8} stroke="#b5b5b5"><path d="m1 9 4 5 10-12" /></Draw>
					<i style={{ fontFamily: 'Liberation Serif, serif', fontSize: 9, color: '#444' }}>
						f<sub style={{ fontSize: 6 }}>x</sub>
					</i>
				</FxIcons>
			</InputBox>
			<InputBox $ml={3}>
				<span />
				<Draw w={6} h={5} box="0 0 10 6" stroke="#555">
					<path d="m1 1 4 4 4-4" strokeWidth="1.500" />
				</Draw>
			</InputBox>
		</FormulaRow>
	);
}

// grid column lines for E..T, A is 1 and U is 21
const VALUE_COLS = [5, 8, 10, 12, 14, 16, 18, 20];
const PCT_COLS = [6, 9, 11, 13, 15, 17, 19, 21];

function OutlineRows() {
	return (
		<OutlineHead>
			<LevelStack>
				<LevelButton>1</LevelButton>
				<LevelButton>2</LevelButton>
				<LevelButton>3</LevelButton>
			</LevelStack>
			<Lanes>
				<Lane>
					<Bracket $start={6} $span={1}>
						<BracketLine />
					</Bracket>
					<Bracket $start={7} $span={1} style={{ padding: 0 }}>
						<Minus />
					</Bracket>
					<Bracket $start={8} $span={14}>
						<BracketLine style={{ borderTopWidth: 1.5 }} />
					</Bracket>
				</Lane>
				<Lane>
					<DotCell $start={6} />
					<DotCell $start={8} />
					{[9, 11, 13, 15, 17, 19].map((c) => (
						<Bracket key={c} $start={c} $span={2} $inset={34}>
							<BracketLine />
							<Minus />
						</Bracket>
					))}
					<Bracket $start={21} $span={1}>
						<BracketLine />
					</Bracket>
				</Lane>
				<Lane>
					{[9, 11, 13, 15, 17, 19].map((c) => (
						<DotCell key={c} $start={c} />
					))}
				</Lane>
			</Lanes>
		</OutlineHead>
	);
}

const LETTERS = 'ABCDEFGHIJKLMNOPQRST'.split('');

function ColumnHeaders() {
	return (
		<ColumnHead>
			<LevelRow>
				<LevelInline>1</LevelInline>
				<LevelInline>2</LevelInline>
				<LevelInline>3</LevelInline>
			</LevelRow>
			<Corner />
			<Letters>
				{LETTERS.map((l) => (
					<Letter key={l} $on={l === 'A'}>
						{l}
					</Letter>
				))}
			</Letters>
		</ColumnHead>
	);
}

type RowData = {
	n: number;
	h?: number;
	no?: number;
	label?: string;
	wide?: boolean;
	tone?: Tone;
	vals?: string[];
	pcts?: string[];
	rule?: string;
};

const zeros = Array(8).fill('0');
const dashes = Array(8).fill('-');
const same = (v: string) => Array(8).fill(v);
const p7 = (...p: string[]) => [...p, ''];

const THIN = '1px solid #2e2e2e';
const MED = '1.5px solid #4a4a4a';
const THICK = '2px solid #000';

const bad = (n: number, no: number, label: string): RowData => ({
	n,
	no,
	label: `Bad Debts Expense - ${label}`,
	vals: zeros,
	pcts: dashes,
});

const dep = (n: number, no: number, label: string, first: string, rest: string, pcts: string[]): RowData => ({
	n,
	no,
	label: `Depreciation - ${label}`,
	vals: [first, ...Array(7).fill(rest)],
	pcts: p7(...pcts),
});

const rows: RowData[] = [
	{ n: 135, label: 'Amortization - Intangible Assets', vals: ['(1,000)', ...Array(7).fill('(83)')], pcts: p7('0.0%', '0.0%', '0.0%', '0.0%', '0.0%', '0.0%', '0.0%') },
	{ n: 136 },
	{ n: 137, no: 63, label: 'Depreciation - Lands', vals: zeros, pcts: dashes },
	dep(138, 64, 'Buildings', '(22,500)', '(1,875)', ['1.0%', '1.1%', '1.0%', '0.9%', '0.6%', '0.6%', '0.6%']),
	dep(139, 65, 'Machinery & Equipment Production', '(122,500)', '(10,208)', ['5.4%', '6.0%', '5.5%', '5.1%', '3.4%', '3.4%', '3.2%']),
	dep(140, 66, 'Machinery & Equipment', '(11,000)', '(917)', ['0.5%', '0.5%', '0.5%', '0.5%', '0.3%', '0.3%', '0.3%']),
	dep(141, 67, 'Motor Vehicles', '(11,200)', '(933)', ['0.5%', '0.5%', '0.5%', '0.5%', '0.3%', '0.3%', '0.3%']),
	dep(142, 68, 'Furniture, Fixtures & Fittings', '(6,429)', '(536)', ['0.3%', '0.3%', '0.3%', '0.3%', '0.2%', '0.2%', '0.2%']),
	dep(143, 69, 'Computers & Office Equipment', '(6,057)', '(505)', ['0.3%', '0.3%', '0.3%', '0.3%', '0.2%', '0.2%', '0.2%']),
	{ n: 144, no: 70, label: 'Depreciation - Other Tangibles', vals: zeros, pcts: dashes, rule: THIN },
	{ n: 145, label: 'Depreciation - Tangible Assets', vals: ['(179,685)', ...Array(7).fill('(14,974)')], pcts: p7('7.9%', '8.8%', '8.1%', '7.5%', '5.0%', '5.0%', '4.7%') },
	{ n: 146 },
	{ n: 147, no: 71, label: 'Depreciation - Production Assets - Absorption', vals: ['115,000', '12,382', ...Array(6).fill('10,208')], pcts: p7('5.0%', '7.2%', '5.5%', '5.1%', '3.4%', '3.4%', '3.2%') },
	bad(148, 72, 'Production - Domestic'),
	bad(149, 73, 'Trade - Domestic'),
	bad(150, 74, 'Services - Domestic'),
	bad(151, 75, 'Production - Export'),
	bad(152, 76, 'Trade - Export'),
	bad(153, 77, 'Services - Export'),
	bad(154, 78, 'Intangibles'),
	bad(155, 79, 'Tangibles'),
	bad(156, 80, 'Long Term Investments'),
	{ n: 157, no: 81, label: 'Other Provisions', vals: ['0', '0', '0', '0', '2,500', '0', '0', '0'], pcts: ['-', '-', '-', '-', '0.8%', '-', '-', '-'] },
	{ n: 158, no: 82, label: 'Accruals & Prepayments', vals: zeros, pcts: dashes, rule: THIN },
	{ n: 159, label: 'Others', vals: ['115,000', '12,382', '10,208', '10,208', '12,708', '10,208', '10,208', '10,208'], pcts: p7('5.0%', '7.2%', '5.5%', '5.1%', '4.2%', '3.4%', '3.2%') },
	{ n: 160, h: 9, vals: same(''), rule: MED },
	{ n: 161, h: 14, tone: 'total', label: 'Total Overheads', vals: ['(475,285)', '(39,056)', '(41,488)', '(41,441)', '(41,170)', '(43,296)', '(43,848)', '(41,430)'], pcts: p7('20.8%', '22.9%', '22.5%', '20.9%', '13.6%', '14.5%', '13.9%'), rule: THIN },
	{ n: 162, h: 9, vals: same(''), rule: MED },
	{ n: 163, h: 17, tone: 'profit', wide: true, label: 'Operating Profit', vals: ['467,759', '62,399', '51,772', '47,024', '71,268', '63,074', '65,726', '28,564'], pcts: p7('20.5%', '36.5%', '28.1%', '23.7%', '23.6%', '21.1%', '20.8%'), rule: THICK },
	{ n: 164 },
	{ n: 165, h: 13, tone: 'profit', wide: true, label: 'Interests & Other (Costs) / Income' },
	{ n: 166 },
	{ n: 167, no: 83, label: 'Bank Interest Income', vals: ['25,000', '650', '454', '1,376', '1,648', '2,118', '2,860', '3,500'], pcts: p7('1.1%', '0.4%', '0.2%', '0.7%', '0.5%', '0.7%', '0.9%') },
	{ n: 168, no: 84, label: 'Dividend Income', vals: zeros, pcts: dashes },
	{ n: 169, no: 85, label: 'Bank Interest Expense', vals: zeros, pcts: dashes },
	{ n: 170, no: 86, label: 'Loan Interest Expense', vals: ['0', '0', '(833)', '(823)', '(812)', '(801)', '(790)', '(779)'], pcts: ['-', '-', '0.5%', '0.4%', '0.3%', '0.3%', '0.3%', ''], rule: THIN },
	{ n: 171, label: 'Interests & Other Costs (-) / Income (+)', vals: ['25,000', '650', '(379)', '554', '836', '1,317', '2,070', '2,722'], pcts: p7('1.1%', '0.4%', '0.2%', '0.3%', '0.3%', '0.4%', '0.7%') },
	{ n: 172, h: 13 },
];

function OutlineMarks({ n }: { n: number }) {
	const levelOne = (n >= 135 && n <= 160) || (n >= 167 && n <= 170);
	const levelTwo = (n >= 137 && n <= 144) || (n >= 147 && n <= 158);
	const topTick = n === 137 || n === 147;
	const oneMinus = n === 161 || n === 171;
	const twoMinus = n === 135 || n === 145 || n === 159;
	const twoDot = n === 136 || n === 146 || n === 160 || (n >= 167 && n <= 170);
	if (n >= 162 && n <= 166) return <Gutter />;
	if (n === 172) return <Gutter />;
	return (
		<Gutter>
			<GutterSlot $line={levelOne} $tick={n === 167}>
				{oneMinus && <Minus />}
			</GutterSlot>
			<GutterSlot $line={levelTwo} $tick={topTick}>
				{twoMinus && <Minus />}
				{twoDot && <OutlineDot />}
			</GutterSlot>
			<GutterSlot>{levelTwo && <OutlineDot />}</GutterSlot>
		</Gutter>
	);
}

function DataRow({ row }: { row: RowData }) {
	const h = row.h ?? 12;
	const tone = row.tone ?? 'normal';
	return (
		<SheetRow $h={h}>
			<OutlineMarks n={row.n} />
			<RowHeader $h={h}>{row.n}</RowHeader>
			<Cells>
				{row.no !== undefined && <SerialNo>{row.no}</SerialNo>}
				{row.label && (
					<Note $tone={tone} $col={row.wide ? 2 : 3}>
						{row.label}
					</Note>
				)}
				{row.vals?.map((v, i) => (
					<ValueCell key={VALUE_COLS[i]} $col={VALUE_COLS[i]} $tone={tone} $neg={v.startsWith('(')} $rule={row.rule}>
						{v}
					</ValueCell>
				))}
				{row.pcts?.map(
					(p, i) =>
						p && (
							<PctCell key={PCT_COLS[i]} $col={PCT_COLS[i]} $dash={p === '-'}>
								{p}
							</PctCell>
						),
				)}
			</Cells>
		</SheetRow>
	);
}

const greenTabs: [string, number][] = [
	['710_BS', 39],
	['720_CFD', 47],
	['730_CFI', 40],
	['740_RTS_KPI', 62],
	['750_BEP_MULTI', 77],
];

const blueTabs: [string, number][] = [
	['800_SLS', 43],
	['810_PROD', 54],
	['820_TRADE', 58],
	['830_OH', 44],
	['840_PRS', 47],
	['850_LTA', 47],
	['860_GP', 43],
	['870_IS', 38],
	['880_BS', 41],
	['890_CFD', 47],
	['900_CFI', 44],
	['910_DASHB', 60],
	['920_BEP_PR', 54],
];

function SheetTabBar() {
	return (
		<TabBar>
			<TabNav>
				<Arrow $dir="left" />
				<Arrow $dir="right" />
				<span>...</span>
			</TabNav>
			<SheetTabs>
				<SheetTab $w={47} $kind="purple">650_DCF</SheetTab>
				<ActiveTab $w={40} $kind="green">700_IS</ActiveTab>
				{greenTabs.map(([name, w]) => (
					<SheetTab key={name} $w={w} $kind="green">{name}</SheetTab>
				))}
				{blueTabs.map(([name, w]) => (
					<SheetTab key={name} $w={w} $kind="blue">{name}</SheetTab>
				))}
			</SheetTabs>
			<TabTools>
				<span>...</span>
				<PlusCircle>+</PlusCircle>
				<SplitDots />
				<HScroll>
					<HEnd><Arrow $dir="left" /></HEnd>
					<HThumb />
					<HEnd style={{ marginRight: 1 }}><Arrow $dir="right" /></HEnd>
				</HScroll>
			</TabTools>
		</TabBar>
	);
}

export default function App() {
	return (
		<>
			<GlobalStyle />
			<Shell>
				<TitleBar>
					<QatBar />
					<Title>ProfitQubePP20190514  -  Excel</Title>
					<WindowBar />
				</TitleBar>
				<RibbonTabs />
				<RibbonGroups />
				<FormulaBar />
				<Middle>
					<SheetArea>
						<OutlineRows />
						<ColumnHeaders />
						<SheetRows>
							{rows.map((row) => (
								<DataRow key={row.n} row={row} />
							))}
						</SheetRows>
					</SheetArea>
					<VScroll>
						<ScrollEnd><Arrow $dir="up" /></ScrollEnd>
						<VThumb />
						<ScrollEnd><Arrow $dir="down" /></ScrollEnd>
					</VScroll>
				</Middle>
				<SheetTabBar />
				<Badge>51</Badge>
			</Shell>
		</>
	);
}
